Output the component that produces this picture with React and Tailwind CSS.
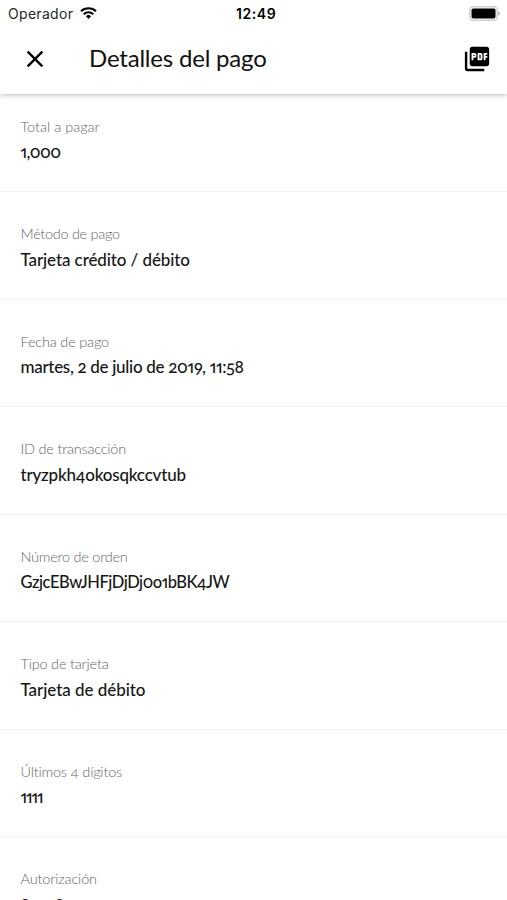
import { MdClose, MdPictureAsPdf } from 'react-icons/md';

const details = [
  { label: 'Total a pagar', value: '1,000', labelClass: '', valueClass: 'text-[17px] tracking-[-0.6px]' },
  { label: 'Método de pago', value: 'Tarjeta crédito / débito', labelClass: 'tracking-[-0.3px]', valueClass: 'text-[17px] tracking-[-0.1px]' },
  { label: 'Fecha de pago', value: 'martes, 2 de julio de 2019, 11:58', labelClass: 'tracking-[-0.18px]', valueClass: 'text-[17px] tracking-[-0.31px]' },
  { label: 'ID de transacción', value: 'tryzpkh4okosqkccvtub', labelClass: 'tracking-[-0.22px]', valueClass: 'text-[17px] tracking-[-0.2px]' },
  { label: 'Número de orden', value: 'GzjcEBwJHFjDjDj0o1bBK4JW', labelClass: 'tracking-[-0.24px]', valueClass: 'text-[16.5px] tracking-[-0.45px]' },
  { label: 'Tipo de tarjeta', value: 'Tarjeta de débito', labelClass: 'tracking-[-0.2px]', valueClass: 'text-[17px] tracking-[-0.05px]' },
  { label: 'Últimos 4 dígitos', value: '1111', labelClass: 'tracking-[-0.2px]', valueClass: 'text-[17px] tracking-[-1.1px]' },
  { label: 'Autorización', value: '801585', labelClass: 'tracking-[-0.15px]', valueClass: 'text-[17px] tracking-[-0.3px]' },
];

function StatusBar() {
  return (
    <div className="relative flex h-7 items-center justify-between pr-[7px] pl-2 font-['Inter',sans-serif] text-black">
      <div className="flex items-center gap-[7px]">
        <span className="text-[14px] leading-7 tracking-[0.3px] text-neutral-800">Operador</span>
        <svg className="-mt-[2px] h-3 w-[17px]" viewBox="0 0 17 12" fill="none" stroke="currentColor" strokeWidth="2.1">
          <path d="M1 4.3a10.8 10.8 0 0 1 15 0" />
          <path d="M3.7 7.2a6.9 6.9 0 0 1 9.6 0" />
          <path d="M8.5 12 5.9 9.3a3.8 3.8 0 0 1 5.2 0z" fill="currentColor" stroke="none" />
        </svg>
      </div>
      <span className="absolute left-[236px] text-[14px] leading-7 font-semibold tracking-[0.55px]">12:49</span>
      <svg className="-mt-[2px] h-[15px] w-[31px]" viewBox="0 0 31 15">
        <rect x="0.75" y="0.75" width="27.5" height="13.5" rx="3.5" fill="none" stroke="#cfcfcf" strokeWidth="1.5" />
        <rect x="2.5" y="2.5" width="24" height="10" rx="1.8" fill="#000" />
        <path d="M29.5 5.3a2.4 2.4 0 0 1 0 4.4z" fill="#a3a3a3" />
      </svg>
    </div>
  );
}

function DetailRow({ label, value, labelClass, valueClass }) {
  return (
    <div className="h-[107.5px] shrink-0 border-b border-[#f3f3f3] pt-[32px] pl-[20.5px] whitespace-nowrap">
      <div className={`text-[14.5px] leading-5 font-light text-[#666] ${labelClass}`}>{label}</div>
      <div className={`mt-[5.5px] leading-5 font-medium text-[#161616] ${valueClass}`}>{value}</div>
    </div>
  );
}

export default function App() {
  return (
    <div className="flex h-[900px] w-full flex-col overflow-hidden bg-white font-['Lato',sans-serif] oldstyle-nums proportional-nums">
      <header className="relative z-10 h-[94px] shrink-0 bg-white shadow-[0_1px_5px_rgba(0,0,0,0.28)]">
        <StatusBar />
        <div className="flex h-[62px] items-center pr-4 pl-[21px]">
          <button aria-label="Cerrar"><MdClose className="size-7" /></button>
          <h1 className="-mt-0.5 ml-[40px] text-[24px] leading-8 tracking-[-0.2px] text-[#111]">Detalles del pago</h1>
          <button className="ml-auto" aria-label="PDF"><MdPictureAsPdf className="size-7 scale-[1.04]" /></button>
        </div>
      </header>
      <main className="flex min-h-0 flex-1 flex-col overflow-hidden">
        <div className="-mt-[9.5px]">
          {details.map((d) => (
            <DetailRow key={d.label} {...d} />
          ))}
        </div>
      </main>
    </div>
  );
}
